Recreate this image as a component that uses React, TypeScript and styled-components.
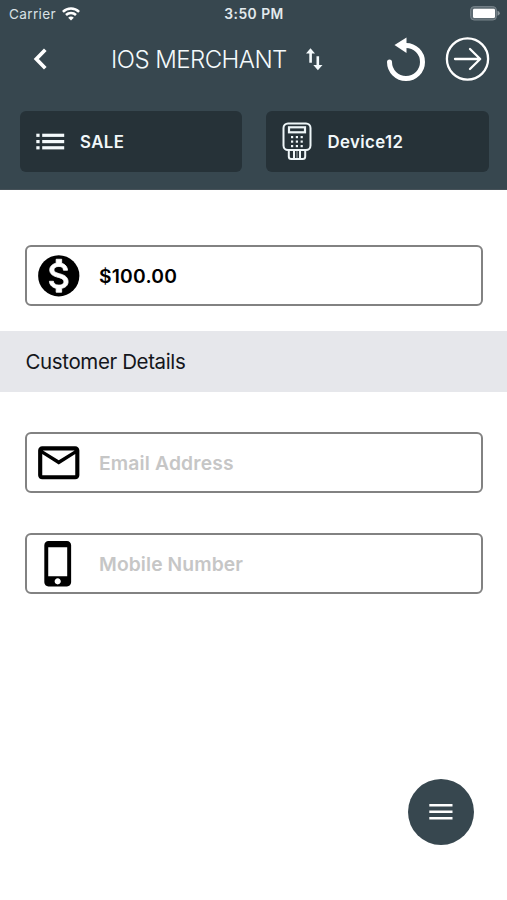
import React from "react";
import styled, { createGlobalStyle } from "styled-components";

const GlobalStyle = createGlobalStyle`
  * { box-sizing: border-box; }
  body { margin: 0; background: #fff; }
  svg { display: block; flex: none; }
`;

const Screen = styled.div`
  position: relative;
  display: flex;
  flex-direction: column;
  width: 507px;
  height: 900px;
  overflow: hidden;
  background: #fff;
  font-family: Inter, "Liberation Sans", sans-serif;
`;

const Header = styled.header`
  display: flex;
  flex-direction: column;
  height: 190px;
  background: #37474f;
  color: #f4fafc;
  border-bottom: 1px solid #465158;
`;

const StatusBar = styled.div`
  display: grid;
  grid-template-columns: 1fr auto 1fr;
  align-items: center;
  height: 27px;
  padding: 0 6px 0 9px;
`;

const Carrier = styled.div`
  display: flex;
  align-items: center;
  gap: 6px;
  font-size: 13.6px;
  letter-spacing: 0.35px;
  color: #d9e1e5;
`;

const Clock = styled.div`
  margin-right: 2px;
  font-size: 13.8px;
  font-weight: 600;
  letter-spacing: 0.5px;
  color: #e3eaed;
`;

const BatterySlot = styled.div`
  display: flex;
  justify-content: flex-end;
`;

const NavBar = styled.nav`
  display: flex;
  align-items: center;
  height: 64px;
  padding: 0 17.5px 0 32px;
`;

const IconButton = styled.button`
  display: flex;
  padding: 0;
  border: 0;
  background: none;
  color: inherit;
`;

const Title = styled.h1`
  display: flex;
  align-items: center;
  gap: 18px;
  flex: 1;
  margin: 1px 0 0 62px;
  font-size: 24px;
  line-height: 30px;
  font-weight: 300;
  letter-spacing: -0.55px;
  white-space: nowrap;
`;

const Actions = styled.div`
  display: flex;
  align-items: center;
  gap: 18.5px;
`;

const Tiles = styled.div`
  display: grid;
  grid-template-columns: 1fr 1fr;
  gap: 24px;
  margin: 20px 18.5px 0 19.5px;
`;

const Tile = styled.button`
  display: flex;
  align-items: center;
  height: 61px;
  padding: 0 0 0 16px;
  border: 0;
  border-radius: 6px;
  background: #263238;
  color: #f2f8fa;
  font: 600 16.8px Inter, sans-serif;
`;

const TileLabel = styled.span`
  margin: 1px 0 0 15.5px;
  letter-spacing: 0.4px;
`;

const Form = styled.main`
  display: flex;
  flex-direction: column;
`;

const Field = styled.label<{ $top: number }>`
  display: flex;
  align-items: center;
  height: 61px;
  margin: ${(p) => p.$top}px 24.5px 0 25px;
  padding-left: 7px;
  border: 2px solid #828282;
  border-radius: 6px;
`;

const Input = styled.input<{ $spacing: number }>`
  flex: 1;
  min-width: 0;
  margin-left: 15.5px;
  padding: 0;
  border: 0;
  outline: 0;
  background: none;
  color: #000;
  font: 600 19.3px Inter, sans-serif;
  letter-spacing: ${(p) => p.$spacing}px;
  &::placeholder { color: #c6c6c6; opacity: 1; }
`;

const SectionTitle = styled.h2`
  display: flex;
  align-items: center;
  height: 61px;
  margin: 25px 0 0;
  padding-left: 25.5px;
  background: #e6e7eb;
  color: #14161b;
  font-size: 20.5px;
  font-weight: 400;
  letter-spacing: -0.38px;
`;

const Fab = styled.button`
  position: absolute;
  left: 408px;
  top: 779px;
  display: flex;
  align-items: center;
  justify-content: center;
  width: 66px;
  height: 66px;
  padding: 0;
  border: 0;
  border-radius: 50%;
  background: #37474f;
`;

const WifiIcon = () => (
  <svg width="18" height="14" viewBox="0 0 18 14" fill="none" stroke="#fff" strokeWidth="2.5">
    <path d="M.9 4.9C5.5.4 12.5.4 17.1 4.9" />
    <path d="M4 8C6.8 5.2 11.2 5.2 14 8" />
    <path d="M9 13.5 6.2 10.7C7.7 9.2 10.3 9.2 11.8 10.7Z" fill="#fff" stroke="none" />
  </svg>
);

const BatteryIcon = () => (
  <svg width="31" height="15" viewBox="0 0 31 15">
    <rect x=".6" y=".6" width="25.8" height="13.4" rx="3.5" fill="#5c6a71" stroke="#77838a" strokeWidth="1" />
    <rect x="3" y="2.7" width="22" height="9.4" rx="1.4" fill="#fff" />
    <path d="M27.5 4.8Q29.8 5.6 29.8 7.3T27.5 9.8Z" fill="#8b969b" />
  </svg>
);

const BackIcon = () => (
  <svg width="17" height="24" viewBox="0 0 17 24" fill="none" stroke="#fff" strokeWidth="3.7">
    <path d="M13.3 2.8 4.3 12l9 9.2" />
  </svg>
);

const SwapIcon = () => (
  <svg width="18" height="24" viewBox="0 0 18 24" fill="#f4fafc">
    <path d="M5.5.3 10 5.5H6.9v9.2H4.3V5.5H1Z" />
    <path d="M11.5 8.3h2.6v8.6H17.5L12.9 22.2 8.3 16.9h3.2Z" />
  </svg>
);

const UndoIcon = () => (
  <svg width="40" height="46" viewBox="0 0 40 46">
    <path d="M3.5 26A16.5 16.5 0 1 0 20 9.5" fill="none" stroke="#fff" strokeWidth="5" strokeLinecap="round" />
    <path d="M8.5 9 20.5 1.5V17Z" fill="#fff" />
  </svg>
);

const NextIcon = () => (
  <svg width="45" height="45" viewBox="0 0 45 45" fill="none" stroke="#fff" strokeWidth="2.3" strokeLinecap="round" strokeLinejoin="round">
    <circle cx="22.5" cy="22" r="20.6" />
    <path d="M10 22h24.5M25 12 35.2 22 25 32" />
  </svg>
);

const ListIcon = () => (
  <svg width="29" height="18" viewBox="0 0 29 18" fill="#f4fafc">
    {[0.7, 7, 13.2].map((y) => (
      <g key={y}>
        <rect x=".3" y={y} width="3.3" height="3.2" />
        <rect x="6.2" y={y} width="22" height="3.2" />
      </g>
    ))}
  </svg>
);

const TerminalIcon = () => (
  <svg width="30" height="39" viewBox="0 0 30 39" fill="none" stroke="#eef6f8" strokeWidth="2">
    <rect x="1.5" y="1.5" width="27" height="26.5" rx="4.5" />
    <rect x="7" y="5.3" width="16" height="5" strokeWidth="2.2" />
    <path d="M6.8 28v6.5q0 2.5 2.5 2.5H20.7q2.5 0 2.500-2.5V28M12 28v9M18 28v9" />
    <path d="M15 29v7" strokeWidth="1" strokeOpacity=".6" />
    <g fill="#eef6f8" stroke="none">
      {[14, 18.5, 23].map((y) =>
        [9, 13.8, 18.6].map((x) => <rect key={`${x}-${y}`} x={x} y={y} width="2.2" height="2.2" />)
      )}
    </g>
  </svg>
);

const FieldSvg = styled.svg.attrs({ viewBox: "0 0 24 24" })`
  width: 49.5px;
  height: 49.5px;
`;

const AmountIcon = () => (
  <FieldSvg>
    <circle cx="12" cy="12" r="10" />
    <path
      fill="#fff"
      stroke="#fff"
      strokeWidth=".4"
      d="M13.41 18.09V20h-2.67v-1.93c-1.71-.36-3.16-1.46-3.27-3.4h1.96c.1 1.05.82 1.87 2.65 1.87 1.96 0 2.4-.98 2.4-1.59 0-.83-.44-1.61-2.67-2.14-2.48-.6-4.18-1.62-4.18-3.67 0-1.72 1.39-2.84 3.11-3.21V4h2.67v1.95c1.86.45 2.79 1.86 2.85 3.39H14.3c-.05-1.11-.64-1.87-2.22-1.87-1.5 0-2.4.68-2.4 1.64 0 .84.65 1.39 2.67 1.91s4.18 1.39 4.18 3.91c-.02 1.83-1.38 2.83-3.12 3.16z"
    />
  </FieldSvg>
);

const EmailIcon = () => (
  <FieldSvg>
    <path d="M20 4H4c-1.1 0-2 .9-2 2v12c0 1.1.9 2 2 2h16c1.1 0 2-.9 2-2V6c0-1.1-.9-2-2-2zm0 14H4V7.7l8 5.100 8-5.100v10.300zm-8-7.2L4.300 6h15.400l-7.700 4.800z" />
  </FieldSvg>
);

const MobileIcon = () => (
  <FieldSvg>
    <path d="M16 1H7C5.9 1 5 1.9 5 3v18c0 1.1.9 2 2 2h9c1.1 0 2-.9 2-2V3c0-1.1-.9-2-2-2zm-4.5 21c-.83 0-1.5-.67-1.5-1.5s.67-1.5 1.5-1.5 1.5.67 1.5 1.5-.67 1.5-1.5 1.5zm4.6-4H6.9V4h9.2v14z" />
  </FieldSvg>
);

const MenuIcon = () => (
  <svg width="24" height="18" viewBox="0 0 24 18" fill="#fff">
    <path d="M.3.9h23.2v2.6H.3zM.3 7.4h23.2v2.6H.3zM.3 13.9h23.2v2.6H.3z" />
  </svg>
);

export default function App() {
  return (
    <Screen>
      <GlobalStyle />
      <Header>
        <StatusBar>
          <Carrier>
            Carrier
            <WifiIcon />
          </Carrier>
          <Clock>3:50 PM</Clock>
          <BatterySlot>
            <BatteryIcon />
          </BatterySlot>
        </StatusBar>
        <NavBar>
          <IconButton aria-label="Back">
            <BackIcon />
          </IconButton>
          <Title>
            IOS MERCHANT
            <SwapIcon />
          </Title>
          <Actions>
            <IconButton aria-label="Reset">
              <UndoIcon />
            </IconButton>
            <IconButton aria-label="Next">
              <NextIcon />
            </IconButton>
          </Actions>
        </NavBar>
        <Tiles>
          <Tile>
            <ListIcon />
            <TileLabel>SALE</TileLabel>
          </Tile>
          <Tile>
            <TerminalIcon />
            <TileLabel>Device12</TileLabel>
          </Tile>
        </Tiles>
      </Header>
      <Form>
        <Field $top={55}>
          <AmountIcon />
          <Input $spacing={0.2} defaultValue="$100.00" />
        </Field>
        <SectionTitle>Customer Details</SectionTitle>
        <Field $top={40}>
          <EmailIcon />
          <Input $spacing={0.16} placeholder="Email Address" />
        </Field>
        <Field $top={40}>
          <MobileIcon />
          <Input $spacing={0.1} placeholder="Mobile Number" />
        </Field>
      </Form>
      <Fab aria-label="Menu">
        <MenuIcon />
      </Fab>
    </Screen>
  );
}
